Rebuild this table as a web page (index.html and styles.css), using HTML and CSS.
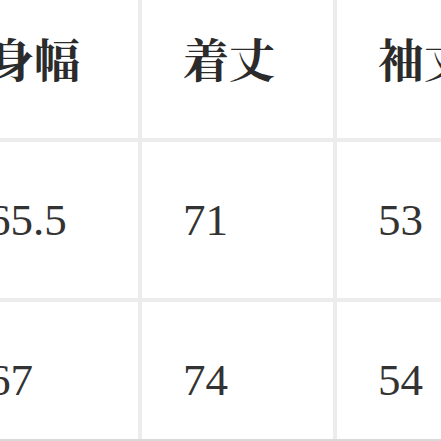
FILE: index.html
```html
<!DOCTYPE html>
<html lang="ja">
<head>
<meta charset="utf-8">
<link rel="stylesheet" href="styles.css">
</head>
<body>
<div class="frame">
  <div class="sizes">
    <div class="cell head">身幅</div>
    <div class="cell head">着丈</div>
    <div class="cell head">袖丈</div>
    <div class="cell num">65.5</div>
    <div class="cell num">71</div>
    <div class="cell num">53</div>
    <div class="cell num">67</div>
    <div class="cell num">74</div>
    <div class="cell num">54</div>
  </div>
</div>
</body>
</html>
```
FILE: styles.css
```css
html, body {
  margin: 0;
  padding: 0;
  background: #ffffff;
}
.frame {
  width: 441px;
  height: 441px;
  overflow: hidden;
  box-sizing: border-box;
  border-bottom: 2px solid #d9d9d9;
}
.sizes {
  display: grid;
  grid-template-columns: 191px 191px 191px;
  grid-auto-rows: 156px;
  gap: 4px;
  background: #ececec;
  margin: -18px 0 0 -53px;
  width: max-content;
}
.cell {
  background: #ffffff;
  display: flex;
  align-items: center;
  padding-left: 41px;
  color: #2b2b2b;
  font-family: "Liberation Serif", "Noto Serif CJK JP", "Noto Sans CJK JP", serif;
}
.head {
  font-size: 46px;
  font-weight: 700;
  padding-bottom: 6px;
  box-sizing: border-box;
}
.num {
  font-size: 45px;
  color: #333333;
}
```
